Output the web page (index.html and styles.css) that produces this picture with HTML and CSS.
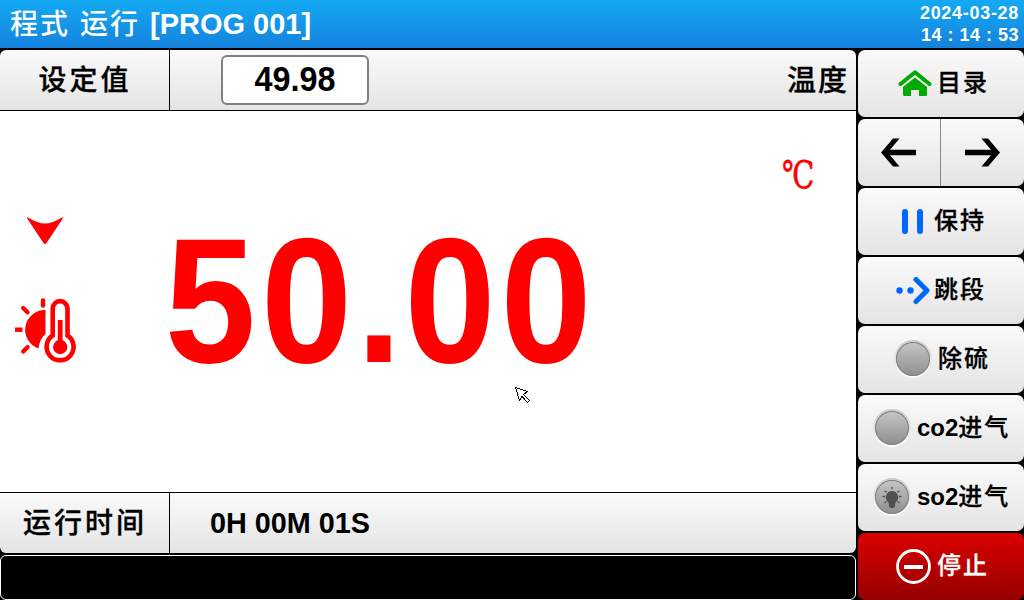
FILE: index.html
```html
<!DOCTYPE html>
<html lang="zh-CN">
<head>
<meta charset="utf-8">
<title>程式 运行</title>
<link rel="stylesheet" href="styles.css">
</head>
<body>
<div class="screen">
  <header class="topbar">
    <h1 class="title"><span class="cjk">程式</span><span class="cjk">运行</span><span class="prog">[PROG 001]</span></h1>
    <div class="clock"><span class="date">2024-03-28</span><span class="time">14 : 14 : 53</span></div>
  </header>
  <div class="content">
    <main class="panel">
      <section class="row row-set">
        <div class="row-label cjk">设定值</div>
        <div class="row-body">
          <div class="set-value"><span>49.98</span></div>
          <span class="quantity cjk">温度</span>
        </div>
      </section>
      <section class="reading">
        <div class="indicators">
          <svg class="trend" width="38" height="30" viewBox="0 0 38 30"><path d="M1.5 1.200Q12 7.500 19 7.500T36.500 1.200Q37.500 1.200 36.500 3L20.500 27Q19 29 17.500 27L1.500 3Q0.500 1.200 1.500 1.200Z" fill="#f00"/></svg>
          <svg class="thermo" width="62" height="66" viewBox="0 0 62 66">
            <path d="M30.500 12A19.800 19.800 0 0 0 23.500 50.500Q24.500 41 30.500 36Z" fill="#f00"/>
            <g stroke="#f00" stroke-width="4.400"><path d="M28 2.500v5" stroke-linecap="round"/><path d="M8.200 10l4.300 4.300" stroke-linecap="round"/><path d="M0 31.700h7.500"/><path d="M8.200 53.500l4.300-4.300" stroke-linecap="round"/></g>
            <path d="M37.700 37.500V10.500a7.400 7.400 0 0 1 14.800 0V37.500a13.500 13.500 0 1 1-14.800 0Z" fill="#fff" stroke="#f00" stroke-width="4.600"/>
            <path d="M45.200 22v26" stroke="#f00" stroke-width="4.800"/><circle cx="45.200" cy="49" r="7.200" fill="#f00"/>
          </svg>
        </div>
        <div class="value">50<span class="point">.</span>00</div>
        <div class="unit">℃</div>
        <svg class="pointer" width="16" height="17" viewBox="0 0 16 17"><path d="M.5.5L12.500 4.500 8.500 7.500 14.500 13.500 12.500 15.500 7 9.500 4.500 13.500Z" fill="#fff" stroke="#000" shape-rendering="crispEdges"/></svg>
      </section>
      <section class="row row-time">
        <div class="row-label cjk">运行时间</div>
        <div class="row-body elapsed">0H 00M 01S</div>
      </section>
      <div class="message"></div>
    </main>
    <nav class="side">
      <button class="btn menu"><svg width="34" height="28" viewBox="0 0 34 28"><path d="M2.500 14L17 2.200 31.500 14" fill="none" stroke="#0a0" stroke-width="4" stroke-linecap="round" stroke-linejoin="round"/><path d="M5 17L17 7.500 29 17V24.500Q29 26 27.500 26H21V20H13V26H6.500Q5 26 5 24.500Z" fill="#0a0"/></svg><span class="cjk">目录</span></button>
      <div class="btn pair">
        <button class="arrow prev"><svg width="36" height="30" viewBox="0 0 36 30"><path d="M0 14.500L12 .5h6.500L9 11.700H35v5.600H9L18.500 28.500H12Z"/></svg></button>
        <button class="arrow next"><svg width="36" height="30" viewBox="0 0 36 30"><path d="M35 14.500L23 .5h-6.500L26 11.700H0v5.600H26L16.500 28.500H23Z"/></svg></button>
      </div>
      <button class="btn hold"><svg width="24" height="26" viewBox="0 0 24 26"><path d="M4 3v19M19 3v19" stroke="#0066ff" stroke-width="6" stroke-linecap="round"/></svg><span class="cjk">保持</span></button>
      <button class="btn skip"><svg width="34" height="28" viewBox="0 0 34 28"><circle cx="3.500" cy="13.500" r="3.200" fill="#0066ff"/><circle cx="14.500" cy="13.500" r="3.200" fill="#0066ff"/><path d="M20 2.500l11 11-11 11" fill="none" stroke="#0066ff" stroke-width="5" stroke-linecap="round" stroke-linejoin="round"/></svg><span class="cjk">跳段</span></button>
      <button class="btn desulf"><i class="lamp"></i><span class="cjk">除硫</span></button>
      <button class="btn gas"><i class="lamp"></i><span>co2<b class="cjk">进气</b></span></button>
      <button class="btn gas"><i class="lamp"><svg width="28" height="28" viewBox="0 0 28 28"><path d="M14 8a6.300 6.300 0 0 1 3.800 11.200Q17 20 17 23q0 2-3 2t-3-2q0-3-.8-3.800A6.300 6.300 0 0 1 14 8Z" fill="#505050"/><path d="M14 4v2M6.500 8l2 1.200M21.500 8l-2 1.200M4.500 13.500H7M21 13.500h2.500M6.500 20l2-1.500M21.500 20l-2-1.500" stroke="#505050" stroke-width="1.400"/></svg></i><span>so2<b class="cjk">进气</b></span></button>
      <button class="btn stop"><svg width="36" height="36" viewBox="0 0 36 36" fill="none" stroke="#fff"><circle cx="17.500" cy="17.500" r="16" stroke-width="2.800"/><path d="M8 18h19" stroke-width="4.200"/></svg><span class="cjk">停止</span></button>
    </nav>
  </div>
</div>
</body>
</html>
```
FILE: styles.css
```css
* { box-sizing: border-box; }
body { margin: 0; background: #000; font-family: "Liberation Sans", "Noto Sans CJK SC", sans-serif; }
button { border: 0; margin: 0; padding: 0; font: inherit; color: inherit; }
svg { display: block; flex: none; }
.cjk { font-family: "Noto Sans CJK SC", sans-serif; font-weight: 500; -webkit-text-stroke: .3px currentColor; }
.screen { width: 1024px; height: 600px; display: flex; flex-direction: column; gap: 2px; overflow: hidden; }
.topbar { height: 48px; flex: none; display: flex; justify-content: space-between; padding: 0 5px 0 10px; color: #fff; background: linear-gradient(#14aaf3, #1582de); }
.title { margin: 0; display: flex; font-size: 29px; line-height: 46px; white-space: nowrap; }
.title .cjk { width: 70px; font-size: 28px; letter-spacing: 2px; line-height: 45px; -webkit-text-stroke: 0; }
.prog { line-height: 48px; }
.clock { display: flex; flex-direction: column; align-items: flex-end; padding-top: 2px; font-weight: bold; font-size: 18px; line-height: 22px; letter-spacing: .7px; }
.time { letter-spacing: .5px; }
.content { flex: 1; display: flex; gap: 2px; min-height: 0; }
.panel { width: 856px; display: flex; flex-direction: column; }
.row { height: 61px; display: flex; flex: none; background: linear-gradient(#fafafa, #e4e4e4); color: #000; }
.row-set { border-bottom: 1px solid #000; border-radius: 6px 6px 0 0; }
.row-time { border-top: 1px solid #000; border-radius: 0 0 6px 6px; margin-bottom: 2px; }
.row-label { width: 170px; border-right: 1px solid #000; text-align: center; font-size: 28px; letter-spacing: 3px; line-height: 57px; padding-left: 1px; }
.row-body { flex: 1; display: flex; justify-content: space-between; }
.set-value { width: 148px; height: 50px; margin: 5px 0 0 51px; border: 2px solid #808080; border-radius: 6px; background: #fff; text-align: center; font-weight: bold; font-size: 33px; line-height: 46px; }
.set-value span { display: block; transform: scale(.98, 1.04); }
.quantity { font-size: 29px; line-height: 56px; letter-spacing: 2px; padding-right: 7px; }
.reading { height: 381px; background: #fff; color: #f00; display: flex; position: relative; }
.indicators { width: 154px; flex: none; padding: 105px 0 0 15px; }
.trend { margin-left: 11px; }
.thermo { margin-top: 52px; }
.value { width: 614px; flex: none; padding: 87px 0 0 11px; font-weight: bold; font-size: 179px; line-height: 204px; letter-spacing: 5.5px; transform: scaleX(.915); transform-origin: 9px 0; }
.point { letter-spacing: 3px; margin-left: -1px; }
.unit { padding: 42px 0 0 14px; font-family: "Liberation Serif", "DejaVu Serif", serif; font-size: 38px; line-height: 44px; transform: scaleX(.76); transform-origin: 14px 0; -webkit-text-stroke: .6px #f00; }
.pointer { position: absolute; left: 515px; top: 276px; }
.elapsed { padding-left: 40px; font-weight: bold; font-size: 28.8px; line-height: 61px; }
.message { height: 45px; border: 1px solid #fff; border-radius: 6px; }
.side { flex: 1; display: flex; flex-direction: column; gap: 2px; }
.btn { height: 67px; flex: none; display: flex; align-items: center; border-radius: 7px; background: linear-gradient(#fafafa, #e4e4e4); color: #000; font-size: 24px; font-weight: bold; line-height: 36px; white-space: nowrap; overflow: hidden; }
.btn .cjk { letter-spacing: 2px; font-size: 24px; }
.btn span { margin-bottom: 5px; }
.btn.gas > span { margin-bottom: 3px; }
.menu { padding-left: 40px; gap: 5px; }
.pair { align-items: stretch; }
.arrow { width: 83px; background: none; display: flex; align-items: center; }
.prev { border-right: 1px solid #888; padding-left: 23px; }
.next { padding-left: 24px; }
.hold { padding-left: 43px; gap: 9px; }
.skip { padding-left: 38px; gap: 4px; }
.desulf { padding-left: 36px; gap: 6px; }
.gas { padding-left: 15px; gap: 6px; }
.lamp { width: 38px; height: 38px; flex: none; display: flex; align-items: center; justify-content: center; margin-bottom: 1px; border: 2px solid transparent; border-radius: 50%; background: linear-gradient(#c6c6c6, #8e8e8e) padding-box, linear-gradient(#ccc, #fff) border-box; box-shadow: inset 0 0 0 1px #808080; }
.stop { padding-left: 38px; gap: 5px; color: #fff; background: linear-gradient(#dc0000, #940000); }
```
